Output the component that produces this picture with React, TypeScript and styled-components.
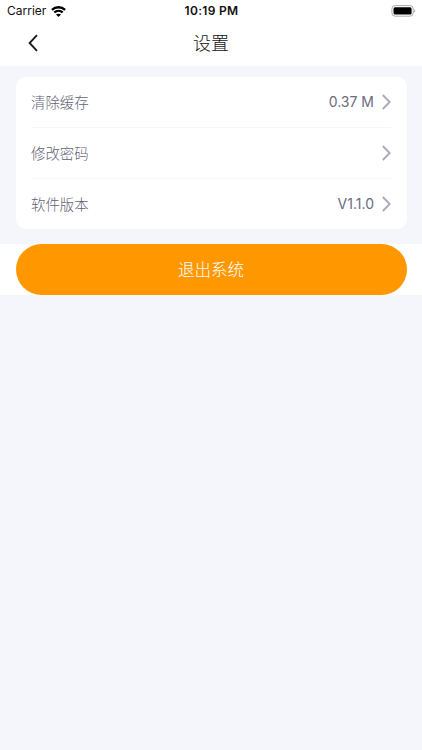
import React from 'react';
import styled, { createGlobalStyle } from 'styled-components';

const GlobalStyle = createGlobalStyle`
  * {
    box-sizing: border-box;
  }

  body {
    margin: 0;
    background: #f5f6fb;
    font-family: Inter, 'Noto Sans CJK SC', sans-serif;
  }
`;

const Page = styled.div`
  min-height: 100vh;
  background: #f5f6fb;
`;

const StatusBar = styled.div`
  display: grid;
  grid-template-columns: 1fr auto 1fr;
  align-items: center;
  height: 22px;
  padding: 0 6px 0 7px;
  background: #fff;
  color: #111;
  font-size: 12px;
  line-height: 22px;
`;

const Carrier = styled.div`
  display: flex;
  align-items: center;
  gap: 5px;
`;

const Time = styled.div`
  font-weight: 600;
  letter-spacing: 0.3px;
`;

const Battery = styled.div`
  display: flex;
  justify-content: flex-end;
`;

const Header = styled.header`
  display: grid;
  grid-template-columns: 40px 1fr 40px;
  align-items: center;
  height: 44px;
  padding: 0 13px;
  background: #fff;
`;

const BackButton = styled.button`
  display: flex;
  align-items: center;
  justify-content: center;
  height: 40px;
  padding: 0 0 2px;
  border: none;
  background: none;
  cursor: pointer;
`;

const Title = styled.h1`
  margin: 0;
  color: #111;
  font-size: 18px;
  font-weight: 300;
  line-height: 40px;
  text-align: center;
`;

const Card = styled.div`
  margin: 11px 15.5px 15px;
  padding: 0 15.5px;
  border-radius: 10px;
  background: #fff;
`;

const Row = styled.div`
  display: flex;
  align-items: center;
  height: 51px;
  color: #626375;
  font-size: 14.4px;

  & + & {
    border-top: 1px solid #f7f7f9;
  }

  &:first-child {
    height: 50px;
  }
`;

const Label = styled.span`
  flex: 1;
  padding-bottom: 1px;
  font-weight: 300;
`;

const Value = styled.span`
  margin-right: 8px;
  padding-bottom: 1px;
  color: #6b6c7c;
  font-size: 14px;
`;

const Footer = styled.div`
  padding: 0 15.5px;
  background: #fff;
`;

const LogoutButton = styled.button`
  display: block;
  width: 100%;
  height: 51px;
  padding: 0 0 1px;
  border: none;
  border-radius: 26px;
  background: #ff9800;
  color: #fff;
  font-family: inherit;
  font-size: 16.5px;
  font-weight: 300;
  cursor: pointer;
`;

const WifiIcon = () => (
  <svg width="15" height="11" viewBox="0 0 16 12" fill="none" stroke="#000">
    <path d="M0.8 4.3C4.8 0.4 11.2 0.4 15.2 4.3" strokeWidth="2.5" />
    <path d="M3.4 7C6 4.7 10 4.7 12.6 7" strokeWidth="2.4" />
    <path d="M8 12L5.3 9.3C6.9 8 9.1 8 10.7 9.3Z" fill="#000" stroke="none" />
  </svg>
);

const BatteryIcon = () => (
  <svg width="25" height="12" viewBox="0 0 25 12">
    <rect x="0.9" y="0.6" width="21.3" height="10.6" rx="3.2" fill="none" stroke="#aaa" />
    <rect x="2.5" y="2.2" width="18.1" height="7.4" rx="1.5" fill="#000" />
    <path d="M23.3 4.2C24.6 4.8 24.6 7 23.3 7.6Z" fill="#999" />
  </svg>
);

const BackIcon = () => (
  <svg width="10" height="18" viewBox="0 0 10 18" fill="none" stroke="#1c1c1c" strokeWidth="1.9">
    <path d="M9 1.2L1.6 9L9 16.8" />
  </svg>
);

const ChevronIcon = () => (
  <svg width="9" height="16" viewBox="0 0 9 16" fill="none" stroke="#a9a9b7" strokeWidth="1.8">
    <path d="M0.8 1L7.7 8L0.8 15" />
  </svg>
);

const items = [
  { label: '清除缓存', value: '0.37 M' },
  { label: '修改密码', value: '' },
  { label: '软件版本', value: 'V1.1.0' },
];

const App: React.FC = () => {
  return (
    <>
      <GlobalStyle />
      <Page>
        <StatusBar>
          <Carrier>
            Carrier
            <WifiIcon />
          </Carrier>
          <Time>10:19 PM</Time>
          <Battery>
            <BatteryIcon />
          </Battery>
        </StatusBar>

        <Header>
          <BackButton aria-label="返回">
            <BackIcon />
          </BackButton>
          <Title>设置</Title>
        </Header>

        <Card>
          {items.map( item => (
            <Row key={item.label}>
              <Label>{item.label}</Label>
              {item.value && <Value>{item.value}</Value>}
              <ChevronIcon />
            </Row>
          ) )}
        </Card>

        <Footer>
          <LogoutButton>退出系统</LogoutButton>
        </Footer>
      </Page>
    </>
  );
};

export default App;
